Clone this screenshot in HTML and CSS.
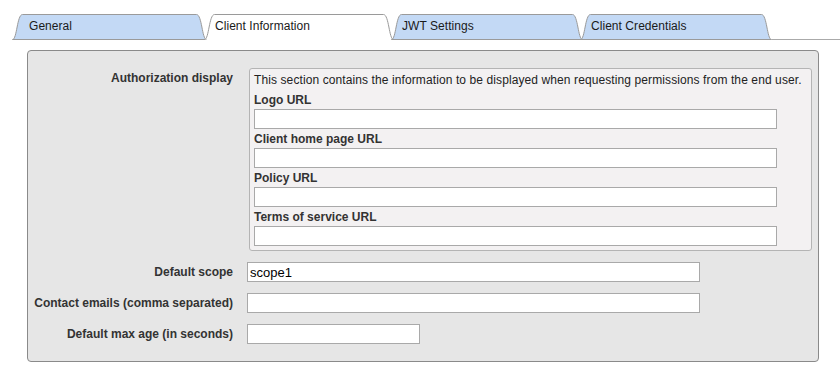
FILE: index.html
```html
<!DOCTYPE html>
<html lang="en">
<head>
    <meta charset="UTF-8">
    <title>Client Information</title>
    <link rel="stylesheet" href="styles.css">
</head>
<body>
<div class="tabs">
    <div class="tab tab-first">
        <svg class="tab-bg" viewBox="0 0 195 26" preserveAspectRatio="none"><path d="M0.5,25.5 C5,25.5 5,0.5 10.5,0.5 L184.5,0.5 C190,0.5 190,25.5 194.5,25.5 Z"/></svg>
        <span>General</span>
    </div>
    <div class="tab active">
        <svg class="tab-bg" viewBox="0 0 190 26" preserveAspectRatio="none"><path d="M0.5,25.5 C5,25.5 5,0.5 10.5,0.5 L179.5,0.5 C185,0.5 185,25.5 189.5,25.5"/></svg>
        <span>Client Information</span>
    </div>
    <div class="tab">
        <svg class="tab-bg" viewBox="0 0 192 26" preserveAspectRatio="none"><path d="M0.5,25.5 C5,25.5 5,0.5 10.5,0.5 L181.5,0.5 C187,0.5 187,25.5 191.5,25.5 Z"/></svg>
        <span>JWT Settings</span>
    </div>
    <div class="tab">
        <svg class="tab-bg" viewBox="0 0 192 26" preserveAspectRatio="none"><path d="M0.5,25.5 C5,25.5 5,0.5 10.5,0.5 L181.5,0.5 C187,0.5 187,25.5 191.5,25.5 Z"/></svg>
        <span>Client Credentials</span>
    </div>
    <div class="tabs-rest"></div>
</div>

<div class="panel">
    <div class="form">
        <div class="label">Authorization display</div>
        <div class="group">
            <p class="group-note">This section contains the information to be displayed when requesting permissions from the end user.</p>
            <div class="group-label">Logo URL</div>
            <input class="field field-wide" type="text">
            <div class="group-label">Client home page URL</div>
            <input class="field field-wide" type="text">
            <div class="group-label">Policy URL</div>
            <input class="field field-wide" type="text">
            <div class="group-label">Terms of service URL</div>
            <input class="field field-wide last" type="text">
        </div>

        <div class="label">Default scope</div>
        <input class="field field-mid" type="text" value="scope1">

        <div class="label">Contact emails (comma separated)</div>
        <input class="field field-mid" type="text">

        <div class="label">Default max age (in seconds)</div>
        <input class="field field-short" type="text">
    </div>
</div>
</body>
</html>
```
FILE: styles.css
```css
* {
    margin: 0;
    padding: 0;
    box-sizing: border-box;
}

body {
    font-family: "Liberation Sans", Arial, sans-serif;
    font-size: 12px;
    color: #222;
    background: #fff;
}

/* tabs */
.tabs {
    display: flex;
    height: 26px;
    margin: 14px 0 0 12px;
}

.tab {
    position: relative;
    z-index: 0;
    height: 26px;
    width: 192px;
    margin-left: -3px;
    padding-left: 11px;
    line-height: 25px;
    color: #1a1a1a;
    letter-spacing: 0.05px;
}

.tab-first {
    width: 195px;
    margin-left: 0;
    padding-left: 17px;
}

.tab.active {
    width: 190px;
}

.tab-bg {
    position: absolute;
    left: 0;
    top: 0;
    width: 100%;
    height: 100%;
    z-index: -1;
}

.tab-bg path {
    fill: #c3d9f5;
    stroke: #9a9a9a;
    stroke-width: 1;
    vector-effect: non-scaling-stroke;
}

.tab.active .tab-bg path {
    fill: #fff;
}

.tabs-rest {
    flex: 1;
    border-bottom: 1px solid #aaa;
}

/* panel */
.panel {
    width: 792px;
    margin: 10px 0 0 27px;
    background: #e6e6e6;
    border: 1px solid #8a8a8a;
    border-radius: 4px;
}

.form {
    display: grid;
    grid-template-columns: 205px auto;
    column-gap: 14px;
    row-gap: 11px;
    align-items: start;
    padding: 17px 0;
}

.label {
    text-align: right;
    font-weight: bold;
    line-height: 20px;
    color: #333;
}

.group {
    width: 563px;
    margin-left: 2px;
    padding: 3px 4px 4px 4px;
    background: #f3f1f2;
    border: 1px solid #b4b4b4;
    border-radius: 3px;
}

.group-note {
    line-height: 17px;
    margin-bottom: 3px;
    letter-spacing: 0.1px;
}

.group-label {
    font-weight: bold;
    line-height: 17px;
    color: #333;
}

.field {
    display: block;
    height: 20px;
    padding: 0 2px;
    border: 1px solid #a9a9a9;
    background: #fff;
    font-family: "Liberation Sans", Arial, sans-serif;
    font-size: 13px;
    color: #000;
    outline: none;
}

.field-wide {
    width: 523px;
    margin-bottom: 2px;
}

.field-wide.last {
    margin-bottom: 0;
}

.field-mid {
    width: 453px;
}

.field-short {
    width: 173px;
}
```
